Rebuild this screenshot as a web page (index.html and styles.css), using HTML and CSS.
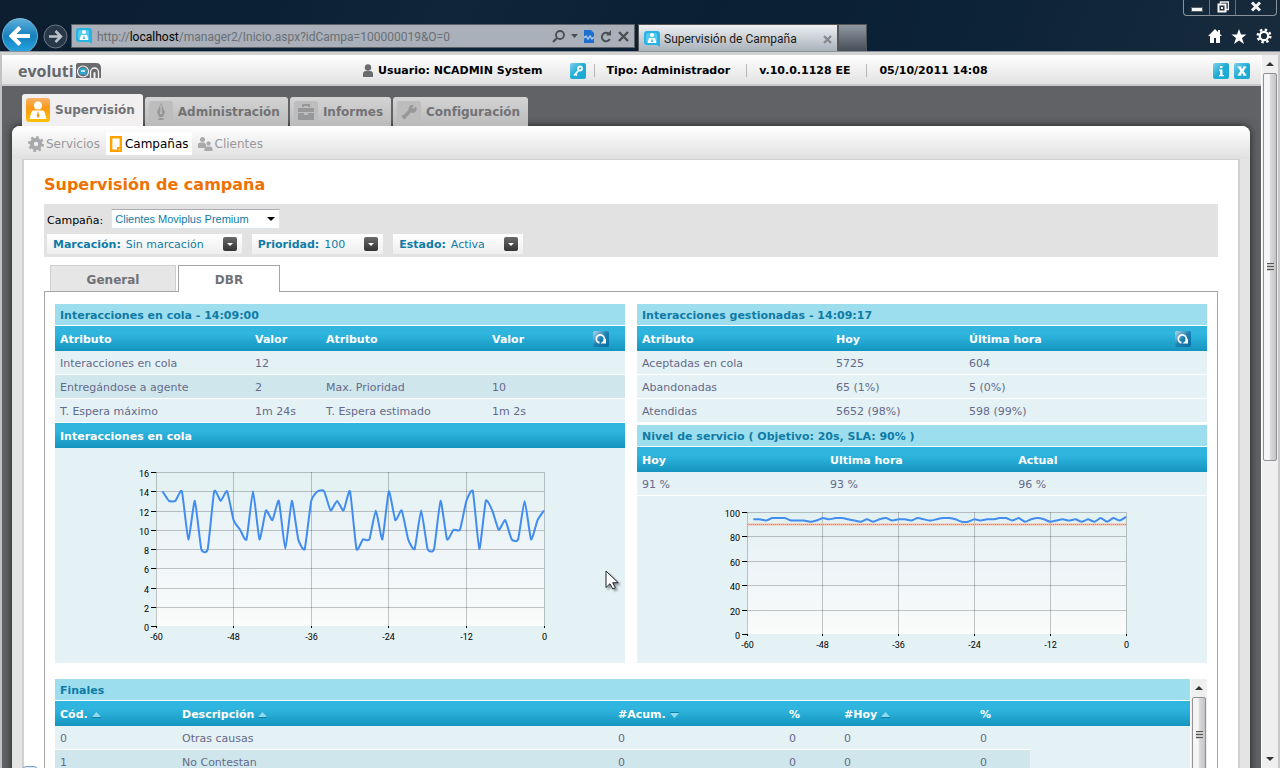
FILE: index.html
```html
<!DOCTYPE html>
<html lang="es">
  <head>
    <meta charset="UTF-8" />
    <meta name="viewport" content="width=device-width, initial-scale=1.0" />
    <title>Supervisión de Campaña</title>
    <link rel="stylesheet" href="styles.css">
  </head>
  <body>
    <!-- shared icons -->
    <svg class="defs" width="0" height="0" aria-hidden="true">
      <defs>
        <linearGradient id="blue" x1="0" y1="0" x2="1" y2="1">
          <stop offset="0" stop-color="#7fd0ea" /><stop offset=".5" stop-color="#1fadd6" /><stop offset="1" stop-color="#1ba8d2" />
        </linearGradient>
        <linearGradient id="darkblue" x1="0" y1="0" x2="1" y2="1">
          <stop offset="0" stop-color="#b5d9ea" /><stop offset=".5" stop-color="#1c7fb0" /><stop offset="1" stop-color="#0a6da3" />
        </linearGradient>
        <linearGradient id="orange" x1="0" y1="0" x2="0" y2="1">
          <stop offset="0" stop-color="#f9b26b" /><stop offset=".4" stop-color="#fb9a16" /><stop offset="1" stop-color="#ffc000" />
        </linearGradient>
        <linearGradient id="back" x1="0" y1="0" x2="0" y2="1">
          <stop offset="0" stop-color="#5fb0dc" /><stop offset=".5" stop-color="#1680bd" /><stop offset="1" stop-color="#27a9e4" />
        </linearGradient>
        <linearGradient id="plot" x1="0" y1="0" x2="0" y2="1">
          <stop offset="0" stop-color="#e2f1f2" /><stop offset=".5" stop-color="#eff5f8" /><stop offset="1" stop-color="#fafbfa" />
        </linearGradient>
        <linearGradient id="dark" x1="0" y1="0" x2="0" y2="1">
          <stop offset="0" stop-color="#6a6a6a" /><stop offset="1" stop-color="#333" />
        </linearGradient>
      </defs>
      <symbol id="favicon" viewBox="0 0 16 16">
        <path d="M3 0h10a3 3 0 0 1 3 3v13l-3-2H3a3 3 0 0 1-3-3V3a3 3 0 0 1 3-3z" fill="#24b3e3" />
        <rect x="2" y="2" width="11" height="10" rx="2" fill="#55c9f0" />
        <circle cx="8" cy="4" r="2" fill="#fff" />
        <path d="M3.500 12l1.500-5h6l1.500 5z" fill="#fff" /><path d="M8 7l1 4H7z" fill="#24b3e3" />
      </symbol>
      <symbol id="reload" viewBox="0 0 16 16">
        <rect width="16" height="16" rx="2" fill="url(#darkblue)" />
        <path d="M6.500 11.500H5.500A4 4 0 1 1 11 9.500" fill="none" stroke="#fff" stroke-width="1.800" />
        <path d="M7.500 12.500h5.500V7.500z" fill="#fff" />
      </symbol>
      <symbol id="chevron" viewBox="0 0 14 14">
        <rect width="14" height="14" rx="2" fill="url(#dark)" />
        <path d="M4 6h6L7 9z" fill="#fff" />
      </symbol>
      <symbol id="sort" viewBox="0 0 9 6">
        <path d="M0 5h9L4.500 0z" fill="#90daee" /><path d="M0 5h9v1H0z" fill="#0d7fa6" />
      </symbol>
    </svg>

    <div class="window">
      <header class="chrome">
        <button class="nav-btn back" aria-label="Atrás">
          <svg width="36" height="36" viewBox="0 0 36 36">
            <circle cx="18" cy="18" r="17.500" fill="url(#back)" stroke="#8cc8e6" stroke-width=".8" />
            <path d="M28 18H11M18 9.500L9.500 18L18 26.500" fill="none" stroke="#fff" stroke-width="4" />
          </svg>
        </button>
        <button class="nav-btn forward" aria-label="Adelante">
          <svg width="25" height="25" viewBox="0 0 25 25">
            <circle cx="12.500" cy="12.500" r="11.500" fill="#283848" stroke="#6d7a85" />
            <path d="M6 12.500h12M12.500 7l5.500 5.500l-5.500 5.500" fill="none" stroke="#b9c2c9" stroke-width="2.500" />
          </svg>
        </button>
        <div class="address">
          <svg class="icon16" aria-hidden="true"><use href="#favicon" /></svg>
          <span class="url">http://<b>localhost</b>/manager2/Inicio.aspx?idCampa=100000019&amp;O=0</span>
          <div class="address-tools">
            <svg width="13" height="13" viewBox="0 0 13 13"><circle cx="8" cy="5" r="4" fill="none" stroke="#4a4f54" stroke-width="1.800" /><path d="M5 8L1 12" stroke="#4a4f54" stroke-width="2.200" /></svg>
            <svg width="7" height="4" viewBox="0 0 7 4"><path d="M0 0h7L3.500 4z" fill="#4a4f54" /></svg>
            <svg width="10" height="13" viewBox="0 0 10 13"><path d="M0 0h7l3 3v10H0z" fill="#1f6fd0" /><path d="M0 8l2-2l2 3l2-3l2 3l2-2" fill="none" stroke="#b7d3f2" stroke-width="1.300" /></svg>
            <svg width="12" height="13" viewBox="0 0 12 13"><path d="M9 4A4.200 4.200 0 1 0 9.800 9" fill="none" stroke="#4a4f54" stroke-width="2" /><path d="M6 5.500h5V0z" fill="#4a4f54" /></svg>
            <svg width="11" height="11" viewBox="0 0 11 11"><path d="M1 1l9 9M10 1l-9 9" stroke="#4a4f54" stroke-width="2.400" /></svg>
          </div>
        </div>
        <div class="browser-tab">
          <svg class="icon16" aria-hidden="true"><use href="#favicon" /></svg>
          <span>Supervisión de Campaña</span>
          <svg class="tab-close" width="9" height="9" viewBox="0 0 9 9"><path d="M1 1l7 7M8 1l-7 7" stroke="#85898d" stroke-width="2.200" /></svg>
        </div>
        <div class="new-tab"></div>
        <div class="chrome-tools">
          <svg width="14" height="14" viewBox="0 0 14 14"><path d="M7 0L0 7h2v7h4V9h2v5h4V7h2l-2-2V1h-2v2z" fill="#fff" /></svg>
          <svg width="16" height="15" viewBox="0 0 16 15"><path d="M8 0l2 5.500h5.500L11 9l2 6l-5-3.500L3 15l2-6L.500 5.500H6z" fill="#fff" /></svg>
          <svg width="16" height="16" viewBox="0 0 16 16"><circle cx="8" cy="8" r="4.200" fill="none" stroke="#fff" stroke-width="2.200" /><circle cx="8" cy="8" r="6.300" fill="none" stroke="#fff" stroke-width="2.400" stroke-dasharray="2.400 2.548" /></svg>
        </div>
        <div class="window-buttons">
          <button aria-label="Minimizar"><svg width="12" height="12" viewBox="0 0 12 12"><rect x=".500" y="6.500" width="11" height="4" fill="#f4f4f4" stroke="#555d66" /></svg></button>
          <button aria-label="Restaurar"><svg width="12" height="12" viewBox="0 0 12 12"><path d="M3.500 3V1h8v7.500H9" fill="none" stroke="#eee" stroke-width="1.500" /><rect x="1.500" y="3.500" width="7" height="7" fill="#263645" stroke="#f4f4f4" stroke-width="2" /><rect x="4" y="6" width="2" height="2" fill="#eee" /></svg></button>
          <button class="wide" aria-label="Cerrar"><svg width="12" height="11" viewBox="0 0 12 11"><path d="M2 1.500l8 8M10 1.500l-8 8" stroke="#f4f4f4" stroke-width="3" /></svg></button>
        </div>
      </header>

      <div class="viewport">
        <div class="page">
          <header class="app-header">
            <a class="logo" href="#" aria-label="evolution">evoluti<svg width="25" height="15" viewBox="0 0 25 15"><path d="M2 0h18q5 0 5 5v10H0V2q0-2 2-2z" fill="#6a6b6f" /><circle cx="7" cy="8.500" r="5.500" fill="#6a6b6f" stroke="#f5f5f5" stroke-width="1.200" /><path d="M3.500 6.500q0-1.500 1.500-1.500h4Q10.500 5 10.500 6.500V12.500l-2-1H5Q3.500 11.500 3.500 10z" fill="#2aa9d2" /><path d="M5 8h4" stroke="#fff" stroke-width="1.500" /><path d="M14.500 15V9a4 4 0 0 1 8 0v6" fill="none" stroke="#f5f5f5" stroke-width="1.300" /><path d="M17.500 15v-5q0-1 1-1t1 1v5z" fill="#f5f5f5" /></svg></a>
            <div class="session">
              <svg width="12" height="14" viewBox="0 0 12 14"><circle cx="6" cy="3.500" r="3.200" fill="#6b6c70" /><path d="M1 13V10q0-3 3-3h4q3 0 3 3v3z" fill="#6b6c70" /></svg>
              <span>Usuario: NCADMIN System</span>
              <a class="key" href="#" aria-label="Cambiar clave"><svg class="icon16" viewBox="0 0 16 16"><rect width="16" height="16" rx="2" fill="url(#blue)" /><circle cx="10" cy="5.500" r="2" fill="none" stroke="#fff" stroke-width="1.800" /><path d="M9 7L4 12.500M5 10.500l2 2" stroke="#fff" stroke-width="1.800" /></svg></a>
              <span class="sep">Tipo: Administrador</span>
              <span class="sep">v.10.0.1128 EE</span>
              <span class="sep">05/10/2011 14:08</span>
            </div>
            <div class="header-links">
              <a href="#" aria-label="Información"><svg class="icon16" viewBox="0 0 16 16"><rect width="16" height="16" rx="2" fill="url(#blue)" /><path d="M7 3h2.500v2H7zM6 6.500h3.500V12H11v1.200H6V12h1.200V7.700H6z" fill="#fff" /></svg></a>
              <a href="#" aria-label="Salir"><svg class="icon16" viewBox="0 0 16 16"><rect width="16" height="16" rx="2" fill="url(#blue)" /><path d="M5 4l6 8M11 4l-6 8" stroke="#fff" stroke-width="2.400" /><path d="M3.500 4h4M9 4h3.500M3.500 12h4M9 12h3.500" stroke="#fff" /></svg></a>
            </div>
          </header>

          <nav class="main-tabs">
            <a class="main-tab active" href="#">
              <svg width="24" height="24" viewBox="0 0 24 24"><rect width="24" height="24" rx="3" fill="url(#orange)" /><circle cx="12" cy="7.500" r="4" fill="#fff" /><path d="M3.500 21l2-7q.5-1.500 2-1.500h9q1.500 0 2 1.500l2 7z" fill="#fff" /><path d="M12 13l1.500 5l-1.500 2l-1.500-2z" fill="#fb9a16" /></svg>
              Supervisión</a>
            <a class="main-tab" href="#">
              <svg width="24" height="22" viewBox="0 0 24 22"><rect width="24" height="22" rx="3" fill="#bdbdbe" /><path d="M12 2l4 9l-2 5h-4l-2-5zM9.500 17h5v2h-5z" fill="#97989a" /><path d="M12 4v7" stroke="#c8c8c8" /><circle cx="12" cy="12" r="1" fill="#c8c8c8" /></svg>
              Administración</a>
            <a class="main-tab" href="#">
              <svg width="24" height="22" viewBox="0 0 24 22"><rect width="24" height="22" rx="3" fill="#bdbdbe" /><path d="M4 7h16v4H4zM4 12h6v2h4v-2h6v7H4zM8 3h8v3h-2V5h-4v1H8z" fill="#97989a" /></svg>
              Informes</a>
            <a class="main-tab" href="#">
              <svg width="24" height="22" viewBox="0 0 24 22"><rect width="24" height="22" rx="3" fill="#bdbdbe" /><path d="M5 15l2 .500l.500 2.500" fill="none" stroke="#97989a" stroke-width="2.500" /><path d="M7 16l8-8" stroke="#97989a" stroke-width="3.500" /><path d="M19 5.500l-2.500 2.500l-1.500-1.500L17 4a4 4 0 1 0 2.500 5q.5-2-.5-3.500z" fill="#97989a" /></svg>
              Configuración</a>
          </nav>

          <div class="shell">
            <nav class="sub-nav">
              <a href="#"><svg width="16" height="16" viewBox="0 0 16 16"><circle cx="8" cy="8" r="4.200" fill="none" stroke="#a9a9ab" stroke-width="4" /><circle cx="8" cy="8" r="6.800" fill="none" stroke="#a9a9ab" stroke-width="2.400" stroke-dasharray="2.600 2.740" /></svg>Servicios</a>
              <a class="active" href="#"><svg width="14" height="16" viewBox="0 0 14 16"><path d="M2.200 1.200h9.600v13.600H2.200z" fill="none" stroke="#ffa200" stroke-width="2.400" /><path d="M8 15v-4h4z" fill="#ffa200" /><path d="M10.500 14.500v-2h1z" fill="#fff" /></svg>Campañas</a>
              <a href="#"><svg width="15" height="14" viewBox="0 0 15 14"><circle cx="4.500" cy="2.500" r="2.500" fill="#a9a9ab" /><path d="M0 11V8q0-2.500 2.500-2.500H6L8 7v4z" fill="#a9a9ab" /><circle cx="10.500" cy="6.500" r="2.500" fill="#a9a9ab" stroke="#f2f2f2" stroke-width=".7" /><path d="M6.500 14v-2q0-2.500 2.500-2.500h3q2.500 0 2.500 2.500v2z" fill="#a9a9ab" /></svg>Clientes</a>
            </nav>

            <main class="content">
              <h1>Supervisión de campaña</h1>

              <div class="filters">
                <div class="filter-row">
                  <label for="campana">Campaña:</label>
                  <select id="campana">
                    <option>Clientes Moviplus Premium</option>
                  </select>
                </div>
                <div class="chips">
                  <button class="chip"><b>Marcación:</b> Sin marcación <svg width="14" height="14"><use href="#chevron" /></svg></button>
                  <button class="chip"><b>Prioridad:</b> 100 <svg width="14" height="14"><use href="#chevron" /></svg></button>
                  <button class="chip"><b>Estado:</b> Activa <svg width="14" height="14"><use href="#chevron" /></svg></button>
                </div>
              </div>

              <div class="tabs">
                <button class="tab">General</button>
                <button class="tab active">DBR</button>
              </div>

              <div class="tab-panel">
                <div class="columns">
                  <section class="card">
                    <h2>Interacciones en cola - 14:09:00</h2>
                    <table>
                      <colgroup><col><col class="w71"><col class="w166"><col class="w101"><col class="w37"></colgroup>
                      <thead>
                        <tr><th>Atributo</th><th>Valor</th><th>Atributo</th><th>Valor</th><th class="tool"><button class="reload" aria-label="Actualizar cola"><svg class="icon16"><use href="#reload" /></svg></button></th></tr>
                      </thead>
                      <tbody>
                        <tr><td>Interacciones en cola</td><td>12</td><td></td><td></td><td></td></tr>
                        <tr class="alt"><td>Entregándose a agente</td><td>2</td><td>Max. Prioridad</td><td>10</td><td></td></tr>
                        <tr><td>T. Espera máximo</td><td>1m 24s</td><td>T. Espera estimado</td><td>1m 2s</td><td></td></tr>
                      </tbody>
                    </table>
                    <h3>Interacciones en cola</h3>
                    <svg class="chart" id="queue-chart" width="570" height="215" viewBox="0 0 570 215"></svg>
                  </section>

                  <section class="card">
                    <h2>Interacciones gestionadas - 14:09:17</h2>
                    <table>
                      <colgroup><col><col class="w133"><col class="w206"><col class="w37"></colgroup>
                      <thead>
                        <tr><th>Atributo</th><th>Hoy</th><th>Última hora</th><th class="tool"><button class="reload" aria-label="Actualizar gestionadas"><svg class="icon16"><use href="#reload" /></svg></button></th></tr>
                      </thead>
                      <tbody>
                        <tr><td>Aceptadas en cola</td><td>5725</td><td>604</td><td></td></tr>
                        <tr><td>Abandonadas</td><td>65 (1%)</td><td>5 (0%)</td><td></td></tr>
                        <tr><td>Atendidas</td><td>5652 (98%)</td><td>598 (99%)</td><td></td></tr>
                      </tbody>
                    </table>
                    <h2 class="spaced">Nivel de servicio ( Objetivo: 20s, SLA: 90% )</h2>
                    <table>
                      <colgroup><col class="third"><col class="third"><col></colgroup>
                      <thead>
                        <tr><th>Hoy</th><th>Ultima hora</th><th>Actual</th></tr>
                      </thead>
                      <tbody>
                        <tr><td>91 %</td><td>93 %</td><td>96 %</td></tr>
                      </tbody>
                    </table>
                    <svg class="chart" id="level-chart" width="570" height="167" viewBox="0 0 570 167"></svg>
                  </section>
                </div>

                <div class="finals">
                  <section class="card">
                    <h2>Finales</h2>
                    <table>
                      <colgroup><col class="w122"><col><col class="w171"><col class="w55"><col class="w136"><col class="w55"><col class="w160"></colgroup>
                      <thead>
                        <tr>
                          <th>Cód. <svg width="9" height="6"><use href="#sort" /></svg></th>
                          <th>Descripción <svg width="9" height="6"><use href="#sort" /></svg></th>
                          <th>#Acum. <svg class="desc" width="9" height="6"><use href="#sort" /></svg></th>
                          <th>%</th>
                          <th>#Hoy <svg width="9" height="6"><use href="#sort" /></svg></th>
                          <th>%</th>
                          <th></th>
                        </tr>
                      </thead>
                      <tbody>
                        <tr><td>0</td><td>Otras causas</td><td>0</td><td>0</td><td>0</td><td>0</td></tr>
                        <tr class="alt"><td>1</td><td>No Contestan</td><td>0</td><td>0</td><td>0</td><td>0</td></tr>
                      </tbody>
                    </table>
                  </section>
                  <div class="scrollbar">
                    <span class="arrow"></span>
                    <span class="thumb short"></span>
                  </div>
                </div>
              </div>
            </main>
          </div>
        </div>

        <div class="scrollbar main">
          <span class="arrow"></span>
          <span class="thumb"></span>
          <span class="arrow down"></span>
        </div>
      </div>

      <div class="status"></div>
      <svg class="cursor" width="18" height="24" viewBox="0 0 18 24"><path d="M1 1v16.500l4-3.800l2.800 5.300l2.500-1.200l-2.600-5.100h5.500z" fill="#fff" stroke="#1b2230" /></svg>
    </div>

    <script>
      const NS = "http://www.w3.org/2000/svg";

      const queue = [
        14, 13, 13, 14, 9, 13, 8, 8, 14, 13, 14, 11, 10, 9, 14, 9, 12, 11, 13, 8,
        13, 9, 8, 13, 14, 14, 12, 13, 12, 14, 8, 9, 9, 12, 9, 14, 11, 12, 9, 8,
        12, 8, 8, 13, 9, 10, 10, 13, 14, 8, 13, 12, 10, 11, 9, 9, 13, 9, 11, 12,
      ];
      const level = [
        94, 94, 93, 95, 95, 95, 93, 93, 93, 92, 93, 95, 94, 95, 95, 94, 93, 92, 94, 92,
        94, 95, 93, 94, 94, 93, 95, 94, 93, 94, 95, 95, 94, 92, 92, 94, 93, 94, 94, 95,
        95, 93, 95, 92, 94, 95, 94, 92, 93, 94, 93, 94, 92, 94, 92, 95, 92, 95, 93, 96,
      ];

      function add(svg, name, attrs, text) {
        const el = document.createElementNS(NS, name);
        for (const key in attrs) el.setAttribute(key, attrs[key]);
        if (text !== undefined) el.textContent = text;
        svg.appendChild(el);
      }

      // Soft spline through the points
      function spline(pts) {
        const k = 0.08;
        let d = `M${pts[0][0]} ${pts[0][1]}`;
        for (let i = 0; i < pts.length - 1; i++) {
          const a = pts[i - 1] || pts[i];
          const b = pts[i];
          const c = pts[i + 1];
          const e = pts[i + 2] || c;
          d += `C${b[0] + (c[0] - a[0]) * k} ${b[1] + (c[1] - a[1]) * k} ${c[0] - (e[0] - b[0]) * k} ${c[1] - (e[1] - b[1]) * k} ${c[0]} ${c[1]}`;
        }
        return d;
      }

      function drawChart(id, data, box, max, step, target) {
        const svg = document.getElementById(id);
        const { x, y, w, h } = box;
        const py = (v) => y + h - (v / max) * h;
        add(svg, "rect", { x, y, width: w, height: h, fill: "url(#plot)" });
        for (let v = 0; v <= max; v += step) {
          const gy = Math.round(py(v)) + 0.5;
          if (v > 0) add(svg, "path", { d: `M${x} ${gy}h${w}`, class: "grid" });
          add(svg, "path", { d: `M${x - 5} ${gy}h5`, class: "tick" });
          add(svg, "text", { x: x - 7, y: gy + 4, class: "label end" }, v);
        }
        for (let v = -60; v <= 0; v += 12) {
          const gx = Math.floor(x + ((v + 60) / 60) * w) + 0.5;
          add(svg, "path", { d: `M${gx} ${y}v${h}`, class: "grid" });
          add(svg, "path", { d: `M${gx} ${y + h}v2`, class: "tick" });
          add(svg, "text", { x: gx, y: y + h + 14, class: "label mid" }, v);
        }
        if (target) {
          const d = `M${x} ${Math.round(py(target)) + 0.5}h${w}`;
          add(svg, "path", { d, class: "target soft" });
          add(svg, "path", { d, class: "target" });
        }
        const pts = data.map((v, i) => [x + ((i + 1) / 60) * w, py(v)]);
        add(svg, "path", { d: spline(pts), class: "series" });
      }

      drawChart("queue-chart", queue, { x: 101, y: 24, w: 388, h: 154 }, 16, 2);
      drawChart("level-chart", level, { x: 110, y: 16, w: 379, h: 122 }, 100, 20, 90);
    </script>
  </body>
</html>
```
FILE: styles.css
```css
* {
  margin: 0;
  padding: 0;
  box-sizing: border-box;
}

:root {
  --title-blue: #0f7ba6;
  --row: #e4f1f5;
  --row-alt: #cfe7ec;
  --text: #666a8a;
  --bar: linear-gradient(#30b6de 30%, #28add6 50%, #1394bf);
}

body {
  font-family: Verdana, "DejaVu Sans", sans-serif;
  font-size: 11px;
  overflow: hidden;
}

a {
  color: inherit;
  text-decoration: none;
}

button {
  border: 0;
  background: none;
  font: inherit;
  color: inherit;
}

svg {
  display: block;
  flex: none;
}

.defs {
  position: absolute;
}

.icon16 {
  width: 16px;
  height: 16px;
}

.window {
  position: relative;
  display: flex;
  flex-direction: column;
  height: 100vh;
  overflow: hidden;
}

/* Browser frame */
.chrome {
  position: relative;
  display: flex;
  align-items: flex-start;
  height: 52px;
  padding: 24px 8px 0 2px;
  background: linear-gradient(110deg, #0c1e30, #0b2034 20%, #10253a 35%, #0a1f33 55%, #0c2237 75%, #172b3c);
  border-bottom: 1px solid #8a939b;
  font-family: "Segoe UI", Roboto, sans-serif;
  font-size: 12px;
  overflow: hidden;
}

.nav-btn {
  flex: none;
}

.back {
  margin-top: -6px;
}

.forward {
  margin: 0 3px 0 5px;
}

.address {
  flex: 0 1 564px;
  display: flex;
  align-items: center;
  gap: 5px;
  height: 24px;
  padding: 0 5px 0 4px;
  background: #a9b0b9;
  border: 1px solid #5d6268;
  color: #6a6f75;
}

.url {
  flex: 1;
  padding-top: 2px;
  white-space: nowrap;
  overflow: hidden;
}

.url b {
  color: #000;
  font-weight: normal;
}

.address-tools {
  display: flex;
  align-items: center;
  gap: 6px;
}

.browser-tab {
  flex: 0 1 200px;
  display: flex;
  align-items: center;
  gap: 4px;
  height: 27px;
  margin-left: 3px;
  padding: 2px 5px 0;
  background: linear-gradient(#eef0f2, #a9b1bb);
  border: 1px solid #555;
  border-bottom: 0;
  color: #1a1a1a;
  white-space: nowrap;
}

.tab-close {
  margin-left: auto;
}

.new-tab {
  width: 29px;
  height: 27px;
  background: linear-gradient(#8f98a3, #444e59);
  border: 1px solid #555;
  border-bottom: 0;
}

.chrome-tools {
  display: flex;
  align-items: center;
  gap: 9px;
  margin: 4px 0 0 auto;
}

.window-buttons {
  position: absolute;
  top: 0;
  right: 3px;
  display: flex;
  height: 16px;
  border: 1px solid #8a939b;
  border-top: 0;
  border-radius: 0 0 4px 4px;
}

.window-buttons button {
  display: flex;
  justify-content: center;
  width: 26px;
  padding-top: 1px;
  border-right: 1px solid #68727c;
}

.window-buttons .wide {
  width: 40px;
  border-right: 0;
}

/* Page area */
.viewport {
  flex: 1;
  display: flex;
  min-height: 0;
  padding-right: 2px;
  border-top: 3px solid #d2d2d2;
  border-left: 2px solid #c2c3c4;
  background: #c8c8c8;
}

.page {
  flex: 1;
  min-width: 0;
  overflow: hidden;
  background: #616266;
}

.app-header {
  display: flex;
  align-items: center;
  height: 31px;
  padding: 2px 11px 0 16px;
  background: linear-gradient(#fff, #e2e2e2);
  border-bottom: 2px solid #c9c9c9;
  font-weight: bold;
}

.logo {
  display: flex;
  align-items: center;
  width: 344px;
  color: #66676b;
  font-family: "Open Sans", sans-serif;
  font-size: 16px;
}

.logo svg {
  margin-left: 2px;
}

.session {
  display: flex;
  align-items: center;
  white-space: nowrap;
}

.session svg {
  margin-right: 4px;
}

.key {
  margin-left: 27px;
}

.sep {
  margin-left: 4px;
  padding: 0 12px;
  border-left: 1px solid #b5b5b5;
}

.header-links {
  display: flex;
  gap: 5px;
  margin-left: auto;
}

.main-tabs {
  display: flex;
  align-items: flex-end;
  gap: 2px;
  padding: 8px 0 0 20px;
}

.main-tab {
  display: flex;
  align-items: center;
  gap: 5px;
  height: 29px;
  padding: 0 8px 0 4px;
  background: linear-gradient(#d4d4d4, #bababa);
  border-radius: 3px 3px 0 0;
  color: #717276;
  font-size: 12px;
  font-weight: bold;
  white-space: nowrap;
}

.main-tab.active {
  height: 32px;
  background: #f1eff0;
}

.shell {
  margin: 0 11px 0 10px;
  padding: 0 10px;
  background: #e4e4e4;
  border-radius: 8px 8px 0 0;
  box-shadow: 0 0 8px #222;
}

.sub-nav {
  display: flex;
  gap: 3px;
  height: 33px;
  margin: 0 -10px;
  padding: 6px 10px 0 13px;
  background: linear-gradient(#fff, #e0e0e0);
  border-radius: 8px 8px 0 0;
  color: #98989a;
  font-size: 12px;
}

.sub-nav a {
  display: flex;
  align-items: center;
  gap: 2px;
  height: 23px;
  padding: 0 3px;
}

.sub-nav .active {
  background: #fff;
  color: #000;
}

.content {
  padding: 14px 20px 0;
  background: #fff;
  border: solid #d0d0d0;
  border-width: 1px 2px 0;
}

h1 {
  color: #ee7203;
  font-size: 16px;
  line-height: 22px;
}

.filters {
  margin-top: 8px;
  padding: 5px 3px 3px;
  background: #e2e2e2;
}

.filter-row {
  display: flex;
  align-items: center;
  gap: 8px;
  height: 20px;
}

.filter-row label {
  padding-top: 3px;
}

.filter-row select {
  appearance: none;
  width: 169px;
  height: 20px;
  padding-left: 3px;
  background: #fff url("data:image/svg+xml,%3Csvg xmlns='http://www.w3.org/2000/svg' width='8' height='4'%3E%3Cpath d='M0 0h8L4 4z'/%3E%3C/svg%3E") no-repeat right 4px center;
  border: 1px solid #e0e6ee;
  border-top-color: #abadb3;
  color: var(--title-blue);
  font-family: Arial, "Liberation Sans", sans-serif;
  font-size: 11px;
}

.chips {
  display: flex;
  gap: 10px;
  margin-top: 5px;
}

.chip {
  display: flex;
  align-items: center;
  gap: 5px;
  height: 20px;
  padding: 0 5px 0 6px;
  background: linear-gradient(#fff, #eee);
  color: var(--title-blue);
}

.chip svg {
  margin-left: 14px;
}

.tabs {
  display: flex;
  gap: 2px;
  margin-top: 8px;
  padding-left: 6px;
}

.tab {
  width: 126px;
  height: 26px;
  padding-top: 2px;
  background: #e6e6e6;
  border: 1px solid #cfcfcf;
  border-bottom: 0;
  color: #717276;
  font-size: 12px;
  font-weight: bold;
}

.tab.active {
  width: 102px;
  height: 27px;
  margin-bottom: -1px;
  background: #fff;
  border-color: #a5a5a5;
  z-index: 1;
}

.tab-panel {
  padding: 12px 10px;
  border: 1px solid #a5a5a5;
  border-bottom: 0;
}

.columns {
  display: grid;
  grid-template-columns: 1fr 1fr;
  gap: 12px;
}

/* Data cards */
.card {
  min-width: 0;
  background: var(--row);
}

h2,
h3 {
  padding-left: 5px;
  font-size: 11px;
}

h2 {
  height: 22px;
  background: #9cdeed;
  border-bottom: 1px solid #fff;
  color: var(--title-blue);
  line-height: 24px;
}

h2.spaced {
  height: 24px;
  border-top: 2px solid #fff;
}

h3 {
  height: 25px;
  background: var(--bar);
  color: #fff;
  line-height: 28px;
}

table {
  width: 100%;
  border-collapse: separate;
  border-spacing: 0;
  table-layout: fixed;
}

th {
  height: 25px;
  padding: 2px 0 0 5px;
  background: var(--bar);
  background-size: 100% 25px;
  color: #fff;
  text-align: left;
  white-space: nowrap;
}

th.tool {
  padding-top: 0;
}

th svg {
  display: inline-block;
  vertical-align: middle;
}

.desc {
  transform: rotate(180deg);
}

td {
  height: 24px;
  padding: 2px 0 0 5px;
  background: var(--row);
  border-bottom: 1px solid #fff;
  color: var(--text);
}

.alt td {
  background: var(--row-alt);
}

.reload,
.reload svg {
  display: block;
}

.w37 { width: 37px; }
.w55 { width: 55px; }
.w71 { width: 71px; }
.w101 { width: 101px; }
.w122 { width: 122px; }
.w133 { width: 133px; }
.w136 { width: 136px; }
.w160 { width: 160px; }
.w166 { width: 166px; }
.w171 { width: 171px; }
.w206 { width: 206px; }
.third { width: 33%; }

.chart {
  max-width: 100%;
  margin: 0 auto;
}

.grid {
  stroke: #000;
  stroke-opacity: 0.22;
}

.tick {
  stroke: #000;
}

.label {
  font-family: "Segoe UI", Roboto, sans-serif;
  font-size: 9px;
  fill: #000;
}

.end {
  text-anchor: end;
}

.mid {
  text-anchor: middle;
}

.series {
  fill: none;
  stroke: #418cf0;
  stroke-width: 2;
  stroke-linejoin: round;
}

.target {
  stroke: #ee7f58;
  stroke-width: 1;
  stroke-dasharray: 1 1;
}

.target.soft {
  stroke: #f5b8a2;
  stroke-width: 2;
  stroke-dasharray: none;
}

.finals {
  display: flex;
  margin-top: 16px;
}

.finals .card {
  flex: 1;
}

/* Scrollbars */
.scrollbar {
  display: flex;
  flex-direction: column;
  width: 17px;
  background: #efefef;
  border-left: 1px solid #fff;
}

.arrow {
  display: flex;
  align-items: center;
  justify-content: center;
  height: 18px;
}

.arrow::before {
  content: "";
  border: 4px solid transparent;
  border-top: 0;
  border-bottom-color: #333;
}

.arrow.down {
  margin-top: auto;
  transform: rotate(180deg);
}

.thumb {
  display: flex;
  align-items: center;
  justify-content: center;
  height: 388px;
  margin: 0 1px;
  background: linear-gradient(90deg, #f6f6f6 45%, #dcdcdf 50%, #c3c3c8);
  border: 1px solid #929295;
  border-radius: 2px;
}

.thumb::before {
  content: "";
  width: 7px;
  height: 8px;
  background: repeating-linear-gradient(#555 0 1px, #ccc 1px 3px);
}

.thumb.short {
  height: 76px;
}

.status {
  position: absolute;
  left: 22px;
  bottom: -6px;
  width: 16px;
  height: 8px;
  border: 1px solid #7da2c4;
  border-radius: 5px;
  background: #dfe9f2;
}

.cursor {
  position: absolute;
  left: 605px;
  top: 570px;
  filter: drop-shadow(2px 2px 1px #0006);
}
```
